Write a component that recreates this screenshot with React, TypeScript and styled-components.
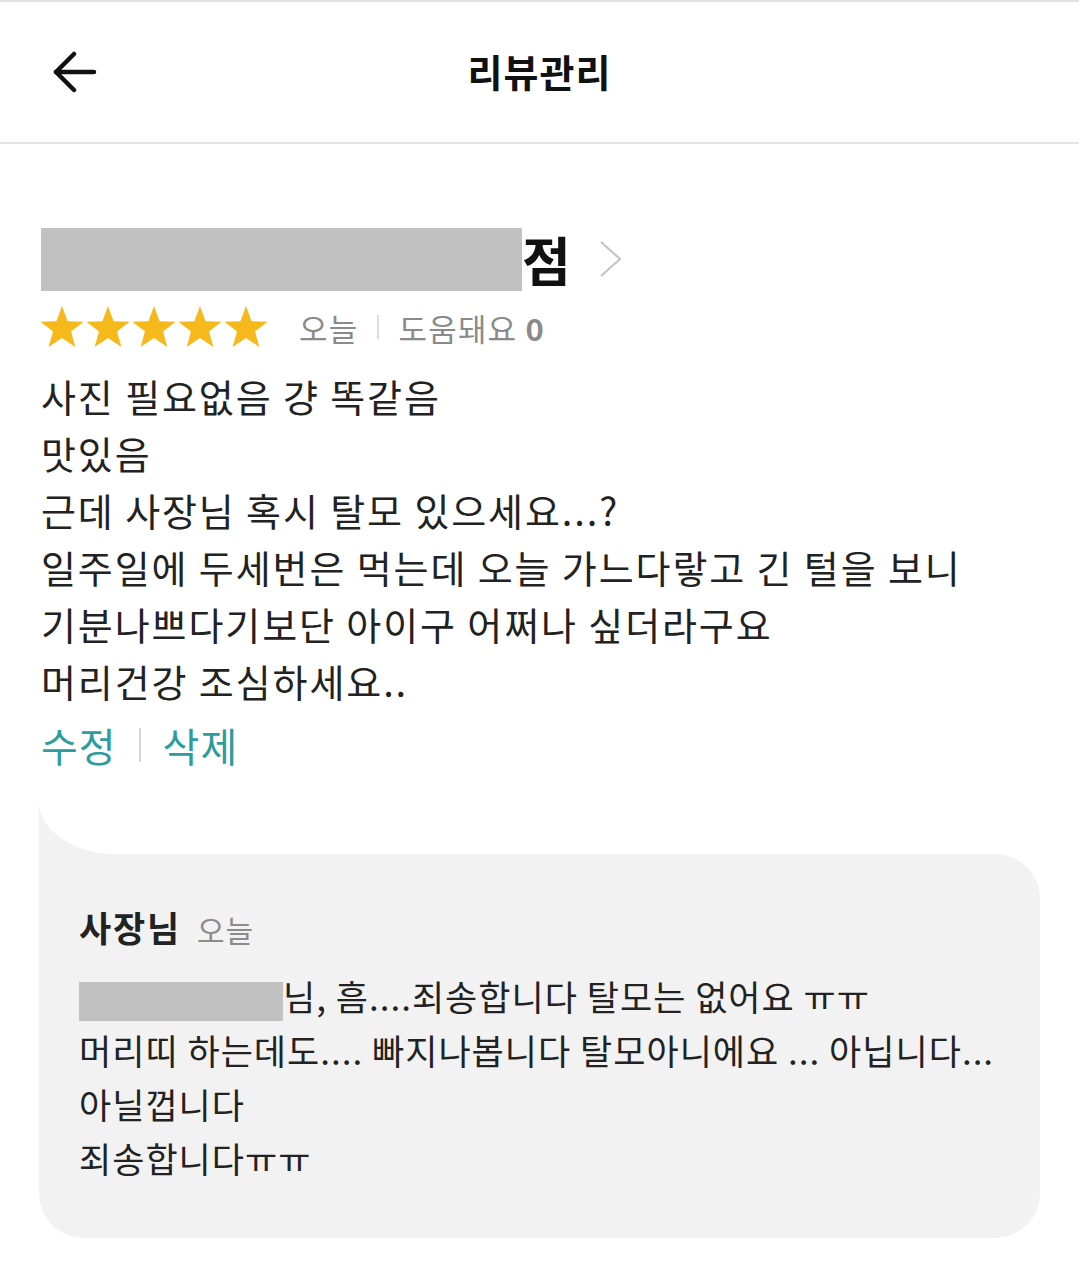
import React from 'react'
import styled, { createGlobalStyle } from 'styled-components'

const GlobalStyle = createGlobalStyle`
  html, body {
    margin: 0;
    padding: 0;
    background: #fff;
  }
  body {
    font-family: "Noto Sans CJK KR", "Noto Sans", sans-serif;
    color: #222;
  }
`

const Page = styled.div`
  width: 1079px;
  min-height: 1287px;
  border-top: 2px solid #e2e2e2;
  box-sizing: border-box;
`

const Header = styled.header`
  display: grid;
  grid-template-columns: 1fr auto 1fr;
  align-items: center;
  height: 140px;
  border-bottom: 2px solid #e4e4e4;
  padding: 0 53px;
`

const BackButton = styled.button`
  display: flex;
  align-items: center;
  justify-self: start;
  padding: 0;
  border: none;
  background: none;
`

const Title = styled.h1`
  margin: 0 0 4px;
  font-size: 38px;
  font-weight: 700;
  color: #111;
  letter-spacing: 1px;
`

const Review = styled.section`
  display: flex;
  flex-direction: column;
  padding: 0 39px 0 41px;
`

const StoreRow = styled.div`
  display: flex;
  align-items: center;
  margin-top: 82px;
  height: 66px;
`

const Masked = styled.span<{ $w: number; $h: number }>`
  display: inline-block;
  width: ${(p) => p.$w}px;
  height: ${(p) => p.$h}px;
  background: #c1c1c1;
  vertical-align: middle;
`

const StoreSuffix = styled.span`
  font-size: 53px;
  font-weight: 700;
  color: #111;
  line-height: 1;
`

const Chevron = styled.span`
  display: flex;
  margin-left: 28px;
`

const MetaRow = styled.div`
  display: flex;
  align-items: center;
  margin-top: 12px;
  height: 46px;
`

const Stars = styled.div`
  display: flex;
  margin-left: -2px;
`

const MetaText = styled.span<{ $bold?: boolean }>`
  font-size: 31px;
  letter-spacing: 1.2px;
  color: #8a8a8a;
  font-weight: ${(p) => (p.$bold ? 700 : 400)};
`

const Divider = styled.span<{ $h: number; $color: string; $gap: number }>`
  display: inline-block;
  width: 2px;
  height: ${(p) => p.$h}px;
  background: ${(p) => p.$color};
  margin: 0 ${(p) => p.$gap}px;
`

const MetaGroup = styled.div`
  display: flex;
  align-items: center;
  margin-left: 30px;
`

const Body = styled.p`
  margin: 17px 0 0;
  font-size: 38px;
  letter-spacing: 1.9px;
  line-height: 57px;
  color: #222;
  white-space: pre-line;
`

const Actions = styled.div`
  display: flex;
  align-items: center;
  margin-top: 7px;
  height: 57px;
`

const ActionLink = styled.span`
  font-size: 40px;
  letter-spacing: 1px;
  color: #2d9c9c;
`

const ReplyBubble = styled.div`
  position: relative;
  margin: 81px 0 0 -2px;
  background: #f2f2f2;
  border-radius: 0 45px 45px 45px;
  padding: 47px 40px 53px;

  &::before,
  &::after {
    content: '';
    position: absolute;
    left: 0;
    top: -53px;
    width: 78px;
    height: 53px;
  }
  &::before {
    background: #f2f2f2;
  }
  &::after {
    background: #fff;
    border-bottom-left-radius: 76px 53px;
  }
`

const ReplyHead = styled.div`
  display: flex;
  align-items: baseline;
  gap: 16px;
  height: 46px;
`

const ReplyAuthor = styled.span`
  font-size: 35px;
  font-weight: 700;
  letter-spacing: 1.8px;
  color: #222;
`

const ReplyDate = styled.span`
  font-size: 30px;
  letter-spacing: 1px;
  color: #8c8c8c;
`

const ReplyText = styled.p`
  margin: 22px 0 0;
  font-size: 35px;
  letter-spacing: 1px;
  line-height: 54px;
  color: #222;
  white-space: pre-line;
`

const Star = () => (
  <svg width="46" height="44" viewBox="0 0 46 44">
    <polygon
      points="23,1 28.6,16.2 44.6,16.7 32,26.6 36.4,42 23,33 9.6,42 14,26.6 1.4,16.7 17.4,16.2"
      fill="#f6b91c"
    />
  </svg>
)

const App = (): JSX.Element => {
  return (
    <Page>
      <GlobalStyle />
      <Header>
        <BackButton aria-label="back">
          <svg width="44" height="42" viewBox="0 0 44 42" fill="none" stroke="#111" strokeWidth="4.5" strokeLinecap="round" strokeLinejoin="round">
            <path d="M21 3 L3 21 L21 39" />
            <path d="M3 21 H41" />
          </svg>
        </BackButton>
        <Title>리뷰관리</Title>
        <span />
      </Header>
      <Review>
        <StoreRow>
          <Masked $w={481} $h={63} />
          <StoreSuffix>점</StoreSuffix>
          <Chevron>
            <svg width="24" height="38" viewBox="0 0 24 38" fill="none" stroke="#c4c4c4" strokeWidth="2.2">
              <polyline points="2,2 21,19 2,36" />
            </svg>
          </Chevron>
        </StoreRow>
        <MetaRow>
          <Stars>
            {[0, 1, 2, 3, 4].map((i) => (
              <Star key={i} />
            ))}
          </Stars>
          <MetaGroup>
            <MetaText>오늘</MetaText>
            <Divider $h={24} $color="#dcdcdc" $gap={19} />
            <MetaText>도움돼요</MetaText>
            <MetaText $bold>&nbsp;0</MetaText>
          </MetaGroup>
        </MetaRow>
        <Body>
          {`사진 필요없음 걍 똑같음
맛있음
근데 사장님 혹시 탈모 있으세요...?
일주일에 두세번은 먹는데 오늘 가느다랗고 긴 털을 보니
기분나쁘다기보단 아이구 어쩌나 싶더라구요
머리건강 조심하세요..`}
        </Body>
        <Actions>
          <ActionLink>수정</ActionLink>
          <Divider $h={34} $color="#d6d6d6" $gap={22} />
          <ActionLink>삭제</ActionLink>
        </Actions>
        <ReplyBubble>
          <ReplyHead>
            <ReplyAuthor>사장님</ReplyAuthor>
            <ReplyDate>오늘</ReplyDate>
          </ReplyHead>
          <ReplyText>
            <Masked $w={204} $h={39} />
            {`님, 흠....죄송합니다 탈모는 없어요 ㅠㅠ
머리띠 하는데도.... 빠지나봅니다 탈모아니에요 ... 아닙니다...
아닐껍니다
죄송합니다ㅠㅠ`}
          </ReplyText>
        </ReplyBubble>
      </Review>
    </Page>
  )
}

export default App
